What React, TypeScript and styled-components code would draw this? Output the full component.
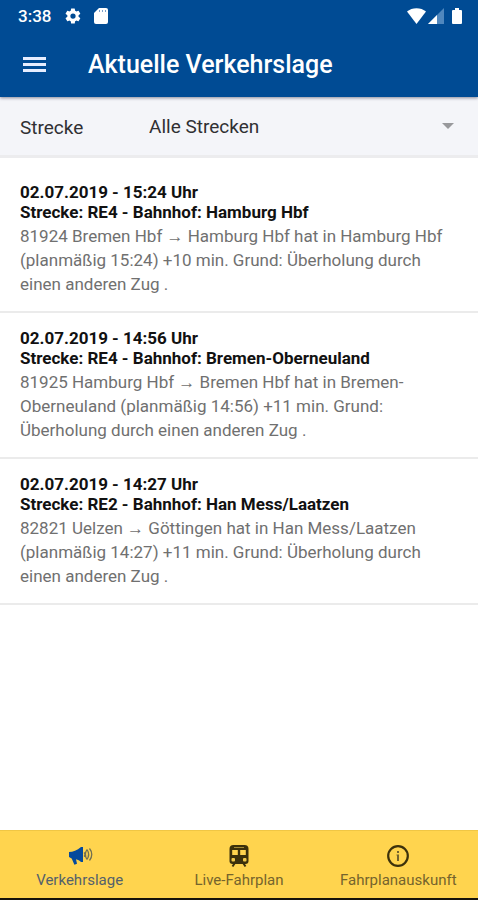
import React, { useState } from "react";
import styled, { createGlobalStyle } from "styled-components";

const GlobalStyle = createGlobalStyle`
  *, *::before, *::after { box-sizing: border-box; }
  body {
    margin: 0;
    background: #ffffff;
    font-family: Roboto, "Liberation Sans", sans-serif;
  }
`;

const Screen = styled.div`
  display: flex;
  flex-direction: column;
  min-height: 100vh;
`;

const TopArea = styled.header`
  position: relative;
  background: #004b94;
  color: #ffffff;
  box-shadow: 0 1px 3px rgba(30, 30, 60, 0.5);
`;

const StatusBar = styled.div`
  display: flex;
  align-items: center;
  height: 32px;
  padding: 0 16px 0 18px;
`;

const Clock = styled.time`
  font-size: 17px;
  font-weight: 500;
  line-height: 20px;
  margin-right: 13px;
`;

const StatusIcons = styled.div<{ $end?: boolean }>`
  display: flex;
  align-items: center;
  gap: ${(p) => (p.$end ? "2px" : "12px")};
  margin-left: ${(p) => (p.$end ? "auto" : "0")};
  svg { display: block; }
`;

const BatterySlot = styled.span`
  margin-left: 6px;
`;

const Toolbar = styled.div`
  display: flex;
  align-items: center;
  height: 65px;
  padding: 0 20px;
`;

const MenuButton = styled.button`
  display: flex;
  padding: 3px;
  border: 0;
  background: none;
  color: #e6edff;
  cursor: pointer;
`;

const Title = styled.h1`
  margin: 0 0 0 39px;
  font-size: 25px;
  font-weight: 500;
  line-height: 32px;
`;

const FilterBar = styled.div`
  display: flex;
  align-items: center;
  height: 61px;
  padding: 0 20px;
  background: #f4f5f9;
  border-bottom: 3px solid #ececee;
  color: #303033;
  font-size: 19px;
`;

const FilterLabel = styled.label`
  width: 129px;
  padding-top: 2px;
`;

const SelectWrap = styled.div`
  position: relative;
  flex: 1;
`;

const RouteSelect = styled.select`
  appearance: none;
  display: block;
  width: 100%;
  height: 32px;
  padding: 0 24px 0 0;
  border: 0;
  background: none;
  color: inherit;
  font: inherit;
`;

const Caret = styled.svg`
  position: absolute;
  right: 4px;
  top: 13px;
  pointer-events: none;
`;

const Messages = styled.main`
  flex: 1;
  padding-top: 9px;
`;

const Message = styled.article`
  padding: 15px 20px;
  border-bottom: 2px solid #ebebeb;
`;

const MessageHeading = styled.h2`
  margin: 0;
  color: #111111;
  font-size: 17px;
  font-weight: 700;
  line-height: 20px;
`;

const MessageText = styled.p`
  margin: 2px 0 0;
  color: #707070;
  font-size: 17px;
  line-height: 24px;
`;

const TabBar = styled.nav`
  display: grid;
  grid-template-columns: repeat(3, 1fr);
  height: 70px;
  background: #ffd44e;
  border-top: 1px solid #f0c644;
  border-bottom: 2px solid #17130a;
`;

const Tab = styled.button<{ $active: boolean }>`
  display: flex;
  flex-direction: column;
  align-items: center;
  padding: 12px 0 0;
  gap: 1px;
  border: 0;
  background: none;
  color: ${(p) => (p.$active ? "#54616b" : "#75642d")};
  font-family: inherit;
  font-size: 15px;
  line-height: 20px;
  cursor: pointer;
  svg { color: ${(p) => (p.$active ? "#064a9c" : "#3c310b")}; }
`;

const Gear = () => (
  <svg width="18" height="18" viewBox="0 0 24 24" fill="currentColor" aria-hidden="true">
    <path d="M19.4 13a7.8 7.8 0 0 0 0-2l2.1-1.6a.5.5 0 0 0 .1-.7l-2-3.4a.5.5 0 0 0-.6-.2l-2.5 1a7.3 7.3 0 0 0-1.7-1L14.4 2.4a.5.5 0 0 0-.5-.4h-4a.5.5 0 0 0-.5.4L9 5.1a7.7 7.7 0 0 0-1.7 1l-2.5-1a.5.5 0 0 0-.6.2l-2 3.4a.5.5 0 0 0 .1.7L4.5 11a7.8 7.8 0 0 0 0 2l-2.2 1.6a.5.5 0 0 0-.1.7l2 3.4c.1.2.4.3.6.2l2.5-1a7.3 7.3 0 0 0 1.7 1l.4 2.7c0 .2.2.4.5.4h4c.2 0 .5-.2.5-.4l.4-2.7a7.7 7.7 0 0 0 1.7-1l2.5 1c.2.1.5 0 .6-.2l2-3.4a.5.5 0 0 0-.1-.7zM12 15.5a3.5 3.5 0 1 1 0-7 3.5 3.5 0 0 1 0 7z" />
  </svg>
);

const SdCard = () => (
  <svg width="14" height="16" viewBox="0 0 14 16" aria-hidden="true">
    <path d="M5 0h7a2 2 0 0 1 2 2v12a2 2 0 0 1-2 2H2a2 2 0 0 1-2-2V5z" fill="currentColor" />
    <path d="M5 2h1v2H5zM8 2h1v2H8zM11 2h1v2h-1z" fill="#7ba0cb" />
  </svg>
);

const Wifi = () => (
  <svg width="19" height="16" viewBox="0 0 19 16" fill="currentColor" aria-hidden="true">
    <path d="M0 3.5C5-1 14-1 19 3.5L9.5 16z" />
  </svg>
);

const Signal = () => (
  <svg width="16" height="16" viewBox="0 0 16 16" aria-hidden="true">
    <path d="M16 0v16H0z" fill="#4f87be" />
    <path d="M9 7v9H0z" fill="currentColor" />
  </svg>
);

const Battery = () => (
  <svg width="10" height="16" viewBox="0 0 10 16" fill="currentColor" aria-hidden="true">
    <path d="M3 0h4v2h2a1 1 0 0 1 1 1v12a1 1 0 0 1-1 1H1a1 1 0 0 1-1-1V3a1 1 0 0 1 1-1h2z" />
  </svg>
);

const MenuIcon = () => (
  <svg width="23" height="16" viewBox="0 0 23 16" fill="currentColor" aria-hidden="true">
    <path d="M0 0h23v3H0zM0 6h23v3H0zM0 12h23v3H0z" />
  </svg>
);

const Megaphone = () => (
  <svg width="26" height="26" viewBox="0 0 26 26" aria-hidden="true">
    <path d="M2 9c4-.2 8-1.4 12-5h2v15h-2c-1.500-1.400-3-2.300-5-2.800l1 4.600-2.600 1-2.700-6.200L2 14z" fill="currentColor" />
    <path d="M17 9.500c1.300 1 1.300 3 0 4M20 6.500c-2 3-2 7 0 10M20 6.500c2 3 2 7 0 10M22.500 5.500c3 3.500 3 8.500 0 12" fill="none" stroke="#716f52" strokeWidth="1.300" />
  </svg>
);

const Train = () => (
  <svg width="26" height="26" viewBox="0 0 26 26" aria-hidden="true">
    <path d="M7.500 2h11q4 0 4 4v12q0 3-3 3h-13q-3 0-3-3V6q0-4 4-4z" fill="currentColor" />
    <path d="M6.200 7h5.600v5H6.200zM14.200 7h5.600v5h-5.600z" fill="#ffd44e" />
    <path d="M8 4.500h10" stroke="#a48a35" />
    <rect x="5.500" y="15" width="3.500" height="3.500" rx="1" fill="#f0c84a" />
    <rect x="17" y="15" width="3.500" height="3.500" rx="1" fill="#f0c84a" />
    <path d="M8.500 20.500l-2 3M17.500 20.500l2 3" stroke="currentColor" strokeWidth="2" />
  </svg>
);

const Info = () => (
  <svg width="26" height="26" viewBox="0 0 26 26" aria-hidden="true">
    <circle cx="13" cy="13" r="9.800" fill="none" stroke="currentColor" strokeWidth="2.200" />
    <path d="M12 8h2v2h-2zM11.500 11.500H14V18h-2v-5.500h-.5z" fill="#75642d" />
  </svg>
);

const messages = [
  {
    time: "02.07.2019 - 15:24 Uhr",
    place: "Strecke: RE4 - Bahnhof: Hamburg Hbf",
    text: "81924 Bremen Hbf → Hamburg Hbf hat in Hamburg Hbf (planmäßig 15:24) +10 min. Grund: Überholung durch einen anderen Zug .",
  },
  {
    time: "02.07.2019 - 14:56 Uhr",
    place: "Strecke: RE4 - Bahnhof: Bremen-Oberneuland",
    text: "81925 Hamburg Hbf → Bremen Hbf hat in Bremen-Oberneuland (planmäßig 14:56) +11 min. Grund: Überholung durch einen anderen Zug .",
  },
  {
    time: "02.07.2019 - 14:27 Uhr",
    place: "Strecke: RE2 - Bahnhof: Han Mess/Laatzen",
    text: "82821 Uelzen → Göttingen hat in Han Mess/Laatzen (planmäßig 14:27) +11 min. Grund: Überholung durch einen anderen Zug .",
  },
];

const tabs = [
  { label: "Verkehrslage", Icon: Megaphone },
  { label: "Live-Fahrplan", Icon: Train },
  { label: "Fahrplanauskunft", Icon: Info },
];

export default function App() {
  const [active, setActive] = useState("Verkehrslage");
  return (
    <>
      <GlobalStyle />
      <Screen>
        <TopArea>
          <StatusBar>
            <Clock>3:38</Clock>
            <StatusIcons>
              <Gear />
              <SdCard />
            </StatusIcons>
            <StatusIcons $end>
              <Wifi />
              <Signal />
              <BatterySlot>
                <Battery />
              </BatterySlot>
            </StatusIcons>
          </StatusBar>
          <Toolbar>
            <MenuButton type="button" aria-label="Menü">
              <MenuIcon />
            </MenuButton>
            <Title>Aktuelle Verkehrslage</Title>
          </Toolbar>
        </TopArea>
        <FilterBar>
          <FilterLabel htmlFor="route">Strecke</FilterLabel>
          <SelectWrap>
            <RouteSelect id="route">
              <option>Alle Strecken</option>
            </RouteSelect>
            <Caret width="12" height="6" viewBox="0 0 12 6" aria-hidden="true">
              <path d="M0 0h12L6 6z" fill="#98999c" />
            </Caret>
          </SelectWrap>
        </FilterBar>
        <Messages>
          {messages.map((m) => (
            <Message key={m.time}>
              <MessageHeading>
                {m.time}
                <br />
                {m.place}
              </MessageHeading>
              <MessageText>{m.text}</MessageText>
            </Message>
          ))}
        </Messages>
        <TabBar>
          {tabs.map(({ label, Icon }) => (
            <Tab
              key={label}
              type="button"
              $active={active === label}
              aria-current={active === label ? "page" : undefined}
              onClick={() => setActive(label)}
            >
              <Icon />
              {label}
            </Tab>
          ))}
        </TabBar>
      </Screen>
    </>
  );
}
